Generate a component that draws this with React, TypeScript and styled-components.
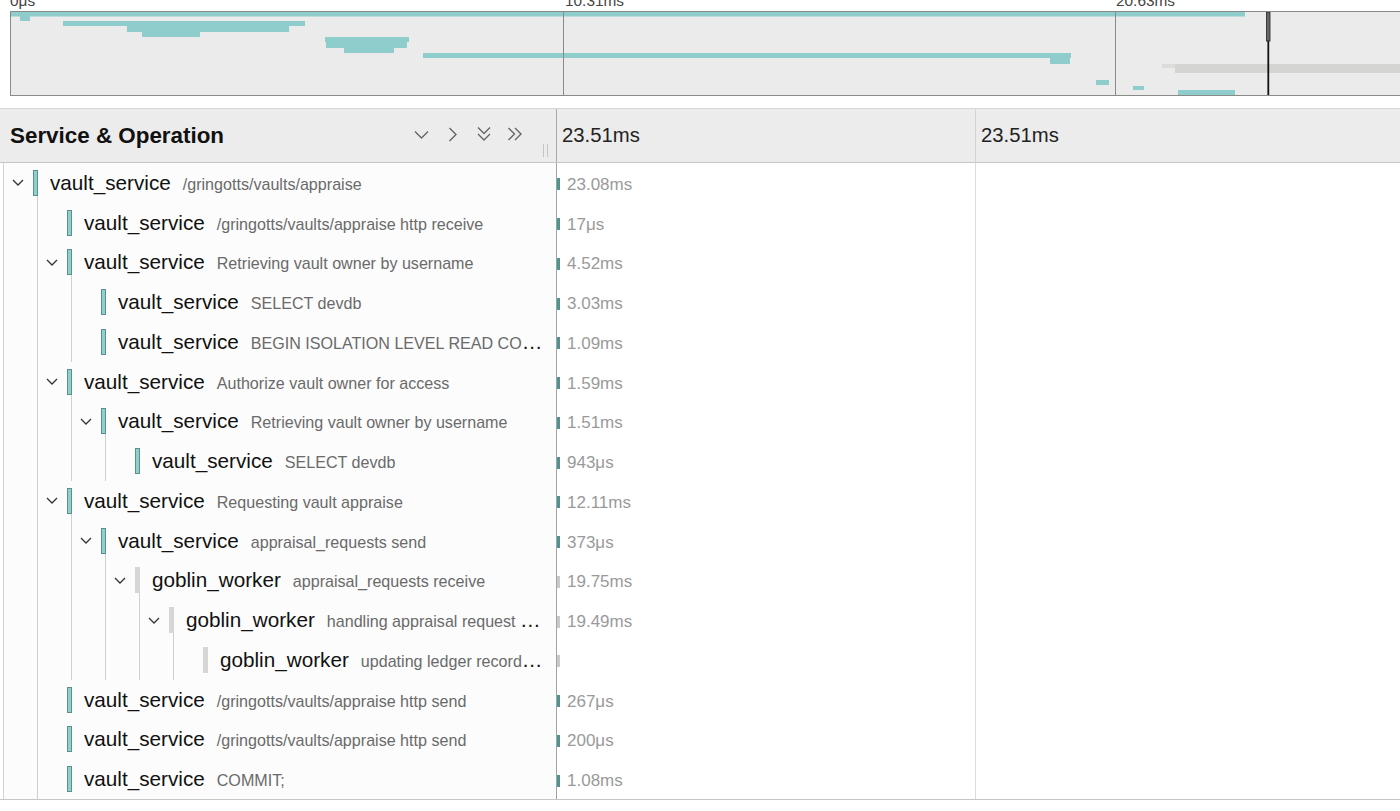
import React from 'react';
import styled, { createGlobalStyle } from 'styled-components';

const GlobalStyle = createGlobalStyle`
  html, body { margin: 0; padding: 0; background: #fff; }
  body { font-family: "Liberation Sans", Arial, Helvetica, sans-serif; overflow: hidden; }
  * { box-sizing: border-box; }
`;

const TEAL_FILL = '#8fcfcc';
const TEAL_EDGE = '#5d8f8d';
const TEAL_MARK = '#4f9290';
const GRAY_FILL = '#d6d6d6';
const GRAY_MARK = '#c9c9c9';

const Page = styled.div`
  width: 1400px;
  height: 811px;
  overflow: hidden;
  background: #fff;
  display: flex;
  flex-direction: column;
`;

/* ---------- overview / minimap ---------- */
const Overview = styled.section`
  height: 108px;
  flex: none;
  display: flex;
  flex-direction: column;
`;

const TickRow = styled.div`
  margin-left: 10px;
  height: 11px;
  overflow: hidden;
  display: grid;
  grid-template-columns: 553px 552px 1fr;
`;

const TickLabel = styled.span<{ $pad: number }>`
  display: block;
  font-size: 15.4px;
  line-height: 15px;
  margin-top: -7px;
  padding-left: ${p => p.$pad}px;
  color: #444;
  white-space: nowrap;
`;

const MiniBox = styled.div`
  margin-left: 10px;
  height: 85px;
  border: 1px solid #8a8a8a;
  border-right: none;
  background: #ebebeb;
  overflow: hidden;
`;

const MiniSvg = styled.svg`
  display: block;
`;

/* ---------- header ---------- */
const Header = styled.header`
  flex: none;
  height: 55px;
  display: grid;
  grid-template-columns: 557px 419px 1fr;
  background: #ececec;
  border-top: 1px solid #d6d6d6;
  border-bottom: 1px solid #c6c6c6;
`;

const TitleCell = styled.div`
  display: flex;
  align-items: center;
  padding-left: 10px;
  padding-right: 8px;
  border-right: 1px solid #a9a9a9;
`;

const Title = styled.h1`
  margin: 0;
  font-size: 22.4px;
  font-weight: 700;
  color: #111;
  white-space: nowrap;
`;

const Controls = styled.div`
  margin-left: auto;
  display: flex;
  align-items: center;
  margin-top: -3px;
`;

const IconButton = styled.span`
  width: 31px;
  height: 20px;
  display: flex;
  align-items: center;
  justify-content: center;
  color: #666;
`;

const Grip = styled.span`
  align-self: flex-end;
  margin: 0 0 5px 13px;
  width: 5px;
  height: 13px;
  border-left: 1px solid #c4c4c4;
  border-right: 1px solid #c4c4c4;
`;

const TimeHead = styled.div<{ $divider?: boolean }>`
  display: flex;
  align-items: center;
  padding-left: 5px;
  font-size: 20.3px;
  color: #222;
  border-right: ${p => (p.$divider ? '1px solid #d4d4d4' : 'none')};
`;

/* ---------- rows ---------- */
const Body = styled.div`
  flex: none;
  display: flex;
  flex-direction: column;
`;

const Row = styled.div`
  height: 39.75px;
  display: grid;
  grid-template-columns: 557px 419px 1fr;
`;

const TreeCell = styled.div`
  margin-left: 3px;
  display: flex;
  align-items: stretch;
  min-width: 0;
  padding-right: 12px;
  background: #fcfcfc;
  border-left: 1px solid #d2d2d2;
  border-right: 1px solid #a3a3a3;
`;

const Indent = styled.span`
  flex: none;
  width: 34px;
  border-right: 1px solid #d0d0d0;
`;

const Toggle = styled.span`
  flex: none;
  width: 29px;
  display: flex;
  align-items: center;
  padding-left: 8px;
  color: #333;
`;

const BarSlot = styled.span`
  flex: none;
  width: 5px;
  display: flex;
  flex-direction: column;
`;

const Spacer = styled.span`
  flex: 1;
`;

const Bar = styled.span<{ $gray: boolean }>`
  flex: none;
  height: 26px;
  background: ${p => (p.$gray ? GRAY_FILL : TEAL_FILL)};
  border: 1px solid ${p => (p.$gray ? GRAY_FILL : TEAL_EDGE)};
`;

const Tail = styled.span<{ $line: boolean }>`
  flex: 1;
  border-right: ${p => (p.$line ? '1px solid #d0d0d0' : 'none')};
`;

const Label = styled.span`
  flex: 1;
  min-width: 0;
  align-self: center;
  margin-left: 12px;
  white-space: nowrap;
  overflow: hidden;
  text-overflow: ellipsis;
  font-size: 20.7px;
  color: #111;
`;

const Op = styled.span`
  margin-left: 12px;
  font-size: 16.1px;
  color: #6a6a6a;
`;

const DurCell = styled.div`
  display: flex;
  align-items: center;
  background: #fff;
  border-right: 1px solid #dcdcdc;
`;

const Marker = styled.span<{ $gray: boolean }>`
  flex: none;
  width: 3px;
  height: 12px;
  margin-top: 3px;
  background: ${p => (p.$gray ? GRAY_MARK : TEAL_MARK)};
`;

const DurText = styled.span`
  margin-left: 7px;
  padding-top: 4px;
  font-size: 17px;
  color: #9a9a9a;
`;

const Lane = styled.div`
  background: #fff;
`;

const Footer = styled.div`
  flex: 1;
  border-top: 1px solid #c6c6c6;
  background: #fff;
`;

/* ---------- icons ---------- */
const ChevronSmall = () => (
  <svg width="12" height="7" viewBox="0 0 12 7">
    <path d="M1 1 L6 6 L11 1" fill="none" stroke="currentColor" strokeWidth="1.3" />
  </svg>
);

const IcoDown = () => (
  <svg width="15" height="9" viewBox="0 0 15 9">
    <path d="M1 1.5 L7.5 8 L14 1.5" fill="none" stroke="currentColor" strokeWidth="1.4" />
  </svg>
);
const IcoRight = () => (
  <svg width="9" height="15" viewBox="0 0 9 15">
    <path d="M1.5 1 L8 7.5 L1.5 14" fill="none" stroke="currentColor" strokeWidth="1.4" />
  </svg>
);
const IcoDoubleDown = () => (
  <svg width="14" height="16" viewBox="0 0 14 16">
    <path d="M1 1.5 L7 7.5 L13 1.5 M1 8 L7 14 L13 8" fill="none" stroke="currentColor" strokeWidth="1.4" />
  </svg>
);
const IcoDoubleRight = () => (
  <svg width="16" height="14" viewBox="0 0 16 14">
    <path d="M1.5 1 L7.5 7 L1.5 13 M8 1 L14 7 L8 13" fill="none" stroke="currentColor" strokeWidth="1.4" />
  </svg>
);

/* ---------- data ---------- */
type Span = {
  depth: number;
  service: string;
  op: string;
  dur: string;
  gray?: boolean;
  kids?: boolean;
};

const spans: Span[] = [
  { depth: 0, service: 'vault_service', op: '/gringotts/vaults/appraise', dur: '23.08ms', kids: true },
  { depth: 1, service: 'vault_service', op: '/gringotts/vaults/appraise http receive', dur: '17μs' },
  { depth: 1, service: 'vault_service', op: 'Retrieving vault owner by username', dur: '4.52ms', kids: true },
  { depth: 2, service: 'vault_service', op: 'SELECT devdb', dur: '3.03ms' },
  { depth: 2, service: 'vault_service', op: 'BEGIN ISOLATION LEVEL READ COMMITTED', dur: '1.09ms' },
  { depth: 1, service: 'vault_service', op: 'Authorize vault owner for access', dur: '1.59ms', kids: true },
  { depth: 2, service: 'vault_service', op: 'Retrieving vault owner by username', dur: '1.51ms', kids: true },
  { depth: 3, service: 'vault_service', op: 'SELECT devdb', dur: '943μs' },
  { depth: 1, service: 'vault_service', op: 'Requesting vault appraise', dur: '12.11ms', kids: true },
  { depth: 2, service: 'vault_service', op: 'appraisal_requests send', dur: '373μs', kids: true },
  { depth: 3, service: 'goblin_worker', op: 'appraisal_requests receive', dur: '19.75ms', gray: true, kids: true },
  { depth: 4, service: 'goblin_worker', op: 'handling appraisal request for vault', dur: '19.49ms', gray: true, kids: true },
  { depth: 5, service: 'goblin_worker', op: 'updating ledger records for vault', dur: '', gray: true },
  { depth: 1, service: 'vault_service', op: '/gringotts/vaults/appraise http send', dur: '267μs' },
  { depth: 1, service: 'vault_service', op: '/gringotts/vaults/appraise http send', dur: '200μs' },
  { depth: 1, service: 'vault_service', op: 'COMMIT;', dur: '1.08ms' },
];

type Rect = [number, number, number, number, string?];
const miniRects: Rect[] = [
  [11, 12, 1234, 4.5],
  [20, 16, 10, 5],
  [63, 21, 242, 5],
  [127, 26, 162, 6],
  [142, 32, 58, 5],
  [325, 37, 84, 5],
  [326, 42, 81, 6],
  [344, 48, 50, 5],
  [423, 53, 648, 5],
  [1050, 58, 20, 6],
  [1162, 64, 14, 4, '#dcdcda'],
  [1175, 64, 225, 9, '#d4d4d2'],
  [1096, 80, 13, 5],
  [1133, 86, 11, 4],
  [1178, 90, 57, 5],
];

const MiniMap = () => (
  <MiniSvg width={1389} height={83} viewBox="11 12 1389 83">
    {miniRects.map(([x, y, w, h, c], i) => (
      <rect key={i} x={x} y={y} width={w} height={h} fill={c || '#8ecdcb'} />
    ))}
    <line x1={563.5} y1={12} x2={563.5} y2={95} stroke="#8a8a8a" strokeWidth={1} />
    <line x1={1115.5} y1={12} x2={1115.5} y2={95} stroke="#8a8a8a" strokeWidth={1} />
    <rect x={1266.5} y={12} width={3.5} height={29} fill="#666" stroke="#222" strokeWidth={0.8} />
    <line x1={1268.3} y1={41} x2={1268.3} y2={95} stroke="#111" strokeWidth={1.8} />
  </MiniSvg>
);

const SpanRow = ({ s }: { s: Span }) => (
  <Row>
    <TreeCell>
      {Array.from({ length: s.depth }).map((_, i) => (
        <Indent key={i} />
      ))}
      <Toggle>{s.kids ? <ChevronSmall /> : null}</Toggle>
      <BarSlot>
        <Spacer />
        <Bar $gray={!!s.gray} />
        <Tail $line={!!s.kids} />
      </BarSlot>
      <Label>
        {s.service}
        <Op>{s.op}</Op>
      </Label>
    </TreeCell>
    <DurCell>
      <Marker $gray={!!s.gray} />
      {s.dur ? <DurText>{s.dur}</DurText> : null}
    </DurCell>
    <Lane />
  </Row>
);

export default function App() {
  return (
    <>
      <GlobalStyle />
      <Page>
        <Overview>
          <TickRow>
            <TickLabel $pad={0}>0μs</TickLabel>
            <TickLabel $pad={2}>10.31ms</TickLabel>
            <TickLabel $pad={1}>20.63ms</TickLabel>
          </TickRow>
          <MiniBox>
            <MiniMap />
          </MiniBox>
        </Overview>
        <Header>
          <TitleCell>
            <Title>Service &amp; Operation</Title>
            <Controls>
              <IconButton><IcoDown /></IconButton>
              <IconButton><IcoRight /></IconButton>
              <IconButton><IcoDoubleDown /></IconButton>
              <IconButton><IcoDoubleRight /></IconButton>
            </Controls>
            <Grip />
          </TitleCell>
          <TimeHead $divider>23.51ms</TimeHead>
          <TimeHead>23.51ms</TimeHead>
        </Header>
        <Body>
          {spans.map((s, i) => (
            <SpanRow key={i} s={s} />
          ))}
        </Body>
        <Footer />
      </Page>
    </>
  );
}
